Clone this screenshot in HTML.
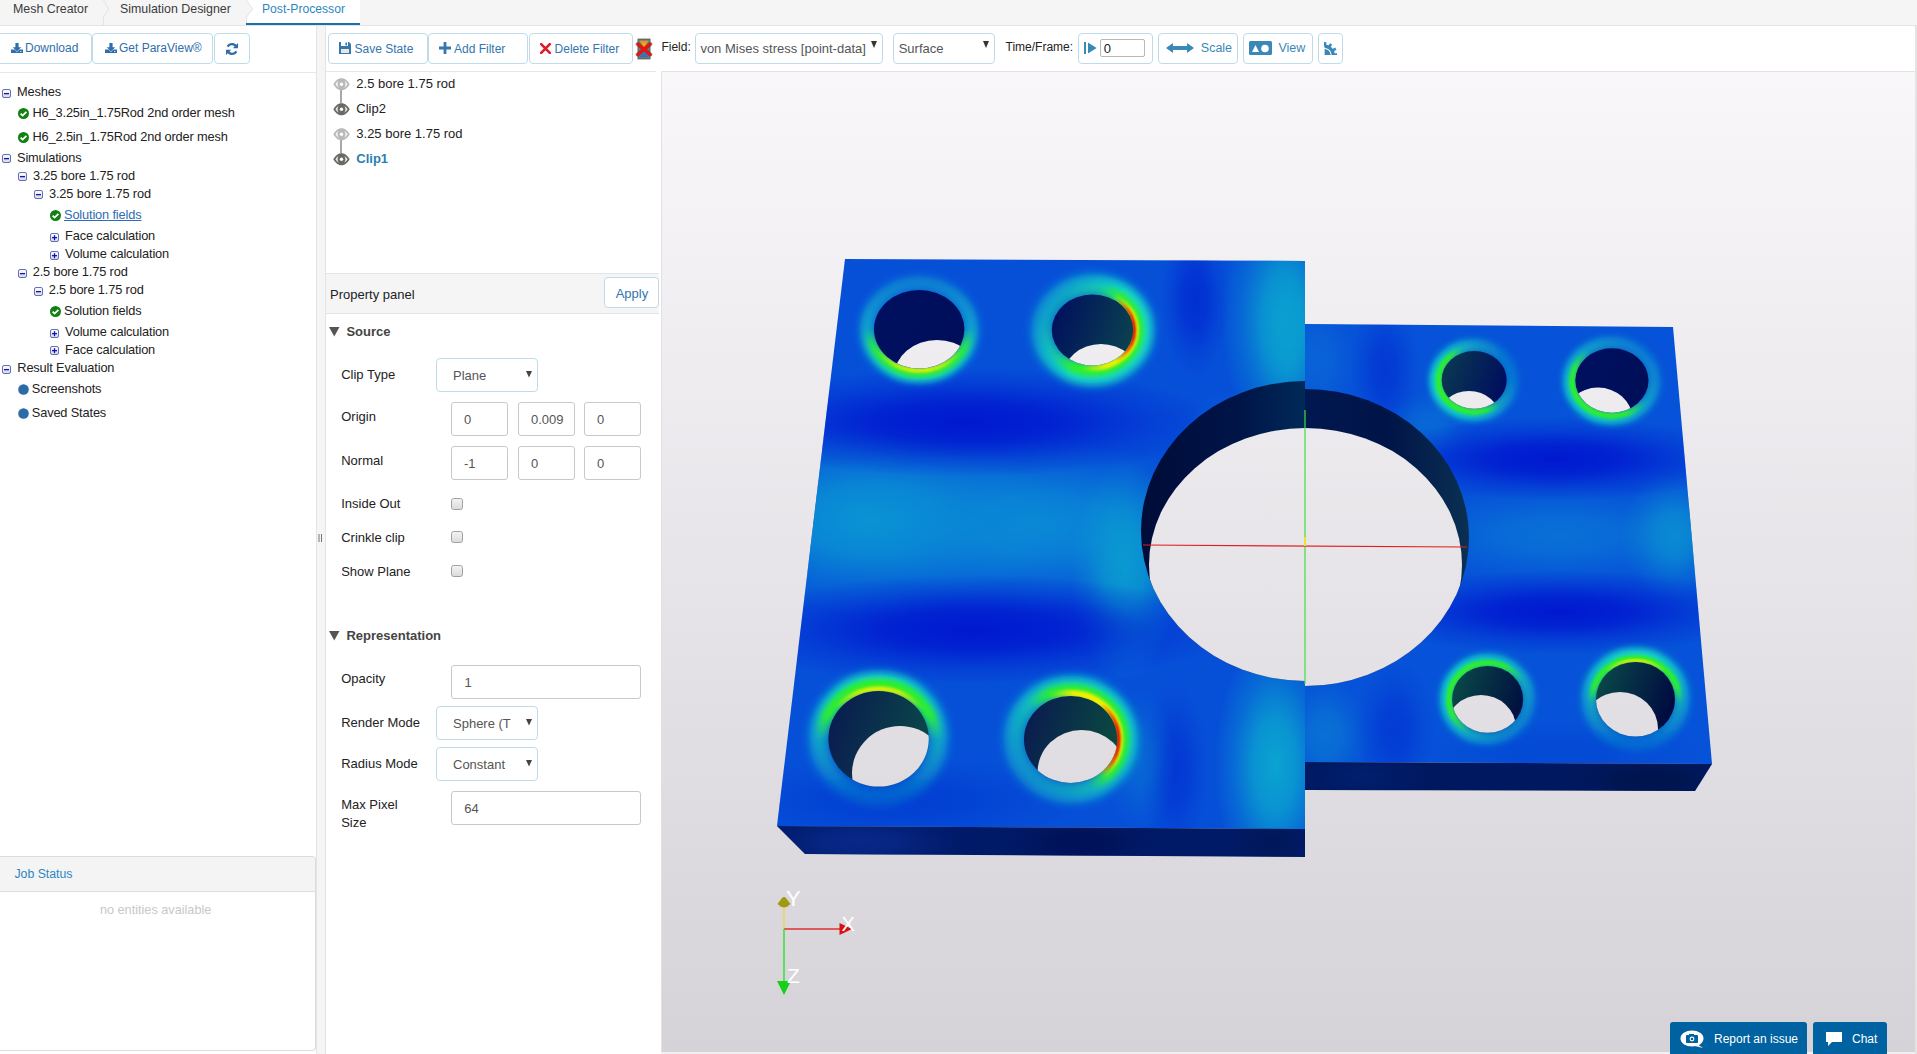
<!DOCTYPE html>
<html><head><meta charset="utf-8">
<style>
*{box-sizing:border-box;margin:0;padding:0}
html,body{width:1917px;height:1054px;overflow:hidden;background:#fff;font-family:"Liberation Sans",sans-serif;color:#333}
.a{position:absolute;display:block}
.t{position:absolute;white-space:nowrap;line-height:1}
.btn{position:absolute;border:1px solid #bfdbea;border-radius:4px;background:#fff}
</style></head><body>
<div class="a" style="left:0px;top:0px;width:1917px;height:26px;background:#f5f5f5;border-bottom:1px solid #e3e3e3"></div><svg class="a" style="left:100px;top:0px" width="14" height="26" viewBox="0 0 14 26"><path d="M3.5 0 L8.5 9 L3.5 17 V25" fill="none" stroke="#e4e4e4" stroke-width="1"/></svg><div class="a" style="left:246px;top:0px;width:114px;height:25px;background:#fff"></div><svg class="a" style="left:244px;top:0px" width="14" height="26" viewBox="0 0 14 26"><path d="M0 0 H2.5 L8.5 9 L2.5 17 V25 H0z" fill="#f5f5f5"/><path d="M2.5 0 L8.5 9 L2.5 17 V25" fill="none" stroke="#e4e4e4" stroke-width="1"/></svg><div class="a" style="left:246px;top:23px;width:114px;height:2px;background:#1a70aa"></div><div class="t" style="left:13px;top:2.90px;font-size:12.4px;color:#3b3b3b;">Mesh Creator</div><div class="t" style="left:120px;top:2.90px;font-size:12.4px;color:#3b3b3b;">Simulation Designer</div><div class="t" style="left:262px;top:3.12px;font-size:12.15px;color:#2a87c1;">Post-Processor</div><div class="a" style="left:0px;top:72px;width:316px;height:1px;background:#e8e8e8"></div><div class="btn" style="left:-4px;top:33px;width:96px;height:31px"></div><div class="btn" style="left:92px;top:33px;width:121px;height:31px"></div><div class="btn" style="left:214px;top:33px;width:36px;height:31px"></div><svg class="a" style="left:11px;top:43px" width="12" height="10" viewBox="0 0 12 10"><path d="M4.4 0h3.2v4.2h2.6L6 8.4 1.8 4.2h2.6z" fill="#2f6ead"/><path d="M0 6.6h3.6L6 9l2.4-2.4H12V10H0z" fill="#2f6ead"/><rect x="9.2" y="8" width="1.2" height="0.9" fill="#fff"/></svg><div class="t" style="left:25px;top:42.44px;font-size:12px;color:#2f6ead;">Download</div><svg class="a" style="left:105px;top:43px" width="12" height="10" viewBox="0 0 12 10"><path d="M4.4 0h3.2v4.2h2.6L6 8.4 1.8 4.2h2.6z" fill="#2f6ead"/><path d="M0 6.6h3.6L6 9l2.4-2.4H12V10H0z" fill="#2f6ead"/><rect x="9.2" y="8" width="1.2" height="0.9" fill="#fff"/></svg><div class="t" style="left:119px;top:42.44px;font-size:12px;color:#2f6ead;">Get ParaView®</div><svg class="a" style="left:226px;top:43px" width="12" height="12" viewBox="0 0 12 12"><path d="M10.5 4.2A5 5 0 0 0 1.6 3.6" fill="none" stroke="#2f6ead" stroke-width="2.2"/><path d="M12 0v5.2H6.8z" fill="#2f6ead"/><path d="M1.5 7.8A5 5 0 0 0 10.4 8.4" fill="none" stroke="#2f6ead" stroke-width="2.2"/><path d="M0 12V6.8h5.2z" fill="#2f6ead"/></svg><svg width="0" height="0" style="position:absolute"><defs><linearGradient id="gbox" x1="0" y1="0" x2="0" y2="1"><stop offset="0" stop-color="#fff"/><stop offset="1" stop-color="#d8d8d8"/></linearGradient></defs></svg><svg class="a" style="left:2px;top:89px" width="9" height="9" viewBox="0 0 9 9"><rect x="0.5" y="0.5" width="8" height="8" rx="1.5" fill="url(#gbox)" stroke="#6270c0" stroke-width="1"/><rect x="2" y="4" width="5" height="1.3" fill="#1010c8"/></svg><div class="t" style="left:17px;top:86.46px;font-size:12.8px;color:#222;letter-spacing:-0.15px">Meshes</div><svg class="a" style="left:18px;top:108px" width="11" height="11" viewBox="0 0 11 11"><circle cx="5.5" cy="5.5" r="5.5" fill="#118011"/><path d="M2.6 5.6l2 2 3.8-3.8" fill="none" stroke="#fff" stroke-width="1.8"/></svg><div class="t" style="left:32.5px;top:107.46px;font-size:12.8px;color:#222;letter-spacing:-0.15px">H6_3.25in_1.75Rod 2nd order mesh</div><svg class="a" style="left:18px;top:132px" width="11" height="11" viewBox="0 0 11 11"><circle cx="5.5" cy="5.5" r="5.5" fill="#118011"/><path d="M2.6 5.6l2 2 3.8-3.8" fill="none" stroke="#fff" stroke-width="1.8"/></svg><div class="t" style="left:32.5px;top:131.46px;font-size:12.8px;color:#222;letter-spacing:-0.15px">H6_2.5in_1.75Rod 2nd order mesh</div><svg class="a" style="left:2px;top:154px" width="9" height="9" viewBox="0 0 9 9"><rect x="0.5" y="0.5" width="8" height="8" rx="1.5" fill="url(#gbox)" stroke="#6270c0" stroke-width="1"/><rect x="2" y="4" width="5" height="1.3" fill="#1010c8"/></svg><div class="t" style="left:17px;top:151.66px;font-size:12.8px;color:#222;letter-spacing:-0.15px">Simulations</div><svg class="a" style="left:18px;top:172px" width="9" height="9" viewBox="0 0 9 9"><rect x="0.5" y="0.5" width="8" height="8" rx="1.5" fill="url(#gbox)" stroke="#6270c0" stroke-width="1"/><rect x="2" y="4" width="5" height="1.3" fill="#1010c8"/></svg><div class="t" style="left:33px;top:169.96px;font-size:12.8px;color:#222;letter-spacing:-0.15px">3.25 bore 1.75 rod</div><svg class="a" style="left:34px;top:190px" width="9" height="9" viewBox="0 0 9 9"><rect x="0.5" y="0.5" width="8" height="8" rx="1.5" fill="url(#gbox)" stroke="#6270c0" stroke-width="1"/><rect x="2" y="4" width="5" height="1.3" fill="#1010c8"/></svg><div class="t" style="left:49px;top:187.96px;font-size:12.8px;color:#222;letter-spacing:-0.15px">3.25 bore 1.75 rod</div><svg class="a" style="left:50px;top:210px" width="11" height="11" viewBox="0 0 11 11"><circle cx="5.5" cy="5.5" r="5.5" fill="#118011"/><path d="M2.6 5.6l2 2 3.8-3.8" fill="none" stroke="#fff" stroke-width="1.8"/></svg><div class="t" style="left:64px;top:209.16px;font-size:12.8px;color:#2d6db5;text-decoration:underline;letter-spacing:-0.15px">Solution fields</div><svg class="a" style="left:50px;top:233px" width="9" height="9" viewBox="0 0 9 9"><rect x="0.5" y="0.5" width="8" height="8" rx="1.5" fill="url(#gbox)" stroke="#6270c0" stroke-width="1"/><rect x="2" y="4" width="5" height="1.3" fill="#1010c8"/><rect x="3.85" y="2.2" width="1.3" height="5" fill="#1010c8"/></svg><div class="t" style="left:65px;top:230.16px;font-size:12.8px;color:#222;letter-spacing:-0.15px">Face calculation</div><svg class="a" style="left:50px;top:251px" width="9" height="9" viewBox="0 0 9 9"><rect x="0.5" y="0.5" width="8" height="8" rx="1.5" fill="url(#gbox)" stroke="#6270c0" stroke-width="1"/><rect x="2" y="4" width="5" height="1.3" fill="#1010c8"/><rect x="3.85" y="2.2" width="1.3" height="5" fill="#1010c8"/></svg><div class="t" style="left:65px;top:248.06px;font-size:12.8px;color:#222;letter-spacing:-0.15px">Volume calculation</div><svg class="a" style="left:18px;top:269px" width="9" height="9" viewBox="0 0 9 9"><rect x="0.5" y="0.5" width="8" height="8" rx="1.5" fill="url(#gbox)" stroke="#6270c0" stroke-width="1"/><rect x="2" y="4" width="5" height="1.3" fill="#1010c8"/></svg><div class="t" style="left:32.7px;top:266.26px;font-size:12.8px;color:#222;letter-spacing:-0.15px">2.5 bore 1.75 rod</div><svg class="a" style="left:34px;top:287px" width="9" height="9" viewBox="0 0 9 9"><rect x="0.5" y="0.5" width="8" height="8" rx="1.5" fill="url(#gbox)" stroke="#6270c0" stroke-width="1"/><rect x="2" y="4" width="5" height="1.3" fill="#1010c8"/></svg><div class="t" style="left:48.7px;top:284.16px;font-size:12.8px;color:#222;letter-spacing:-0.15px">2.5 bore 1.75 rod</div><svg class="a" style="left:50px;top:306px" width="11" height="11" viewBox="0 0 11 11"><circle cx="5.5" cy="5.5" r="5.5" fill="#118011"/><path d="M2.6 5.6l2 2 3.8-3.8" fill="none" stroke="#fff" stroke-width="1.8"/></svg><div class="t" style="left:64px;top:305.16px;font-size:12.8px;color:#222;letter-spacing:-0.15px">Solution fields</div><svg class="a" style="left:50px;top:329px" width="9" height="9" viewBox="0 0 9 9"><rect x="0.5" y="0.5" width="8" height="8" rx="1.5" fill="url(#gbox)" stroke="#6270c0" stroke-width="1"/><rect x="2" y="4" width="5" height="1.3" fill="#1010c8"/><rect x="3.85" y="2.2" width="1.3" height="5" fill="#1010c8"/></svg><div class="t" style="left:65px;top:326.06px;font-size:12.8px;color:#222;letter-spacing:-0.15px">Volume calculation</div><svg class="a" style="left:50px;top:346px" width="9" height="9" viewBox="0 0 9 9"><rect x="0.5" y="0.5" width="8" height="8" rx="1.5" fill="url(#gbox)" stroke="#6270c0" stroke-width="1"/><rect x="2" y="4" width="5" height="1.3" fill="#1010c8"/><rect x="3.85" y="2.2" width="1.3" height="5" fill="#1010c8"/></svg><div class="t" style="left:65px;top:343.96px;font-size:12.8px;color:#222;letter-spacing:-0.15px">Face calculation</div><svg class="a" style="left:2px;top:365px" width="9" height="9" viewBox="0 0 9 9"><rect x="0.5" y="0.5" width="8" height="8" rx="1.5" fill="url(#gbox)" stroke="#6270c0" stroke-width="1"/><rect x="2" y="4" width="5" height="1.3" fill="#1010c8"/></svg><div class="t" style="left:17.3px;top:362.26px;font-size:12.8px;color:#222;letter-spacing:-0.15px">Result Evaluation</div><svg class="a" style="left:18px;top:384px" width="11" height="11" viewBox="0 0 11 11"><circle cx="5.5" cy="5.5" r="5.3" fill="#2d6aa8"/></svg><div class="t" style="left:31.8px;top:383.06px;font-size:12.8px;color:#222;letter-spacing:-0.15px">Screenshots</div><svg class="a" style="left:18px;top:408px" width="11" height="11" viewBox="0 0 11 11"><circle cx="5.5" cy="5.5" r="5.3" fill="#2d6aa8"/></svg><div class="t" style="left:31.8px;top:407.16px;font-size:12.8px;color:#222;letter-spacing:-0.15px">Saved States</div><div class="a" style="left:0px;top:856px;width:316px;height:195px;border:1px solid #dcdcdc;border-radius:0 4px 4px 0;border-left:none;background:#fff"></div><div class="a" style="left:0px;top:857px;width:315px;height:35px;background:#f4f4f4;border-bottom:1px solid #dcdcdc;border-radius:0 3px 0 0"></div><div class="t" style="left:14.4px;top:868.49px;font-size:12.3px;color:#2b88c2;">Job Status</div><div class="t" style="left:99.9px;top:904.25px;font-size:12.7px;color:#c8c8c8;">no entities available</div><div class="a" style="left:316px;top:26px;width:10px;height:1028px;background:#f5f5f5;border-left:1px solid #e4e4e4;border-right:1px solid #e4e4e4"></div><svg class="a" style="left:318px;top:534px" width="5" height="8" viewBox="0 0 5 8"><rect x="0.5" y="0" width="1" height="8" fill="#777"/><rect x="3" y="0" width="1" height="8" fill="#777"/></svg><div class="a" style="left:326px;top:26px;width:1590px;height:45px;background:#fff"></div><div class="a" style="left:326px;top:71px;width:330px;height:1px;background:#e6e6e6"></div><div class="btn" style="left:328px;top:33px;width:100px;height:31px"></div><svg class="a" style="left:339px;top:42px" width="12" height="12" viewBox="0 0 12 12"><path d="M0 0h10l2 2v10H0z" fill="#3478ae"/><rect x="2" y="0" width="7" height="4" fill="#fff"/><rect x="6.4" y="0.6" width="1.6" height="2.8" fill="#3478ae"/><rect x="2" y="7" width="8" height="4" fill="#e6e6e6"/></svg><div class="t" style="left:354.6px;top:42.74px;font-size:12px;color:#3275b0;">Save State</div><div class="btn" style="left:428px;top:33px;width:100px;height:31px"></div><svg class="a" style="left:439px;top:42px" width="12" height="12" viewBox="0 0 12 12"><path d="M4.6 0h2.8v4.6H12v2.8H7.4V12H4.6V7.4H0V4.6h4.6z" fill="#3478ae"/></svg><div class="t" style="left:454px;top:42.74px;font-size:12px;color:#3275b0;">Add Filter</div><div class="btn" style="left:529px;top:33px;width:104px;height:31px"></div><svg class="a" style="left:540px;top:43px" width="11" height="11" viewBox="0 0 11 11"><path d="M1.2 1.2L9.8 9.8M9.8 1.2L1.2 9.8" stroke="#e01b24" stroke-width="2.6" stroke-linecap="round"/></svg><div class="t" style="left:554.6px;top:42.74px;font-size:12px;color:#3275b0;">Delete Filter</div><svg class="a" style="left:635px;top:38px" width="18" height="22" viewBox="0 0 18 22"><defs><linearGradient id="hgt" x1="0" y1="0" x2="0" y2="1"><stop offset="0" stop-color="#f08a20"/><stop offset="1" stop-color="#ffc000"/></linearGradient><linearGradient id="hgb" x1="0" y1="0" x2="0" y2="1"><stop offset="0" stop-color="#1a9ae0"/><stop offset="1" stop-color="#5060a0"/></linearGradient></defs><rect x="3.2" y="1.3" width="11.6" height="19.4" fill="#5a8a8a" stroke="#666" stroke-width="1.4"/><path d="M4.5 2.8h9L9 10z" fill="url(#hgt)"/><path d="M4.5 19.2h9L9 12z" fill="url(#hgb)"/><path d="M2.8 6.2L15.2 16.5M15.2 6.2L2.8 16.5" stroke="#444" stroke-width="4.2" stroke-linecap="round" opacity="0.55"/><path d="M2.8 6.2L15.2 16.5M15.2 6.2L2.8 16.5" stroke="#ee1111" stroke-width="3" stroke-linecap="round"/></svg><div class="t" style="left:661.4px;top:40.54px;font-size:12px;color:#222;">Field:</div><div class="btn" style="left:695px;top:33px;width:188px;height:31px"></div><div class="t" style="left:700.4px;top:41.50px;font-size:13px;color:#555;">von Mises stress [point-data]</div><svg class="a" style="left:871px;top:41px" width="6" height="8" viewBox="0 0 6 8"><path d="M0 0h6L3 7z" fill="#333"/></svg><div class="btn" style="left:893px;top:33px;width:102px;height:31px"></div><div class="t" style="left:898.7px;top:41.50px;font-size:13px;color:#555;">Surface</div><svg class="a" style="left:983px;top:41px" width="6" height="8" viewBox="0 0 6 8"><path d="M0 0h6L3 7z" fill="#333"/></svg><div class="t" style="left:1005.5px;top:40.84px;font-size:12px;color:#222;">Time/Frame:</div><div class="btn" style="left:1078px;top:33px;width:75px;height:31px"></div><svg class="a" style="left:1084px;top:42px" width="13" height="12" viewBox="0 0 13 12"><rect x="0" y="0" width="2" height="12" fill="#3a88b8"/><path d="M4 0.5L12.6 6 4 11.5z" fill="#3a88b8"/></svg><div class="a" style="left:1100px;top:39px;width:45px;height:18px;border:1px solid #b8b8b8;border-radius:2px;background:#fff"></div><div class="t" style="left:1103.7px;top:41.50px;font-size:13px;color:#222;">0</div><div class="btn" style="left:1158px;top:33px;width:80px;height:31px"></div><svg class="a" style="left:1166px;top:43px" width="28" height="10" viewBox="0 0 28 10"><path d="M0 5L7 0v3h14V0l7 5-7 5V7H7v3z" fill="#3a88b8"/></svg><div class="t" style="left:1200.8px;top:41.92px;font-size:12.5px;color:#3a88b8;">Scale</div><div class="btn" style="left:1243px;top:33px;width:70px;height:31px"></div><svg class="a" style="left:1249px;top:41px" width="23" height="14" viewBox="0 0 23 14"><rect x="0" y="0" width="23" height="14" rx="1.5" fill="#3a88b8"/><path d="M3 11L6.5 4 10 11z" fill="#fff"/><circle cx="16" cy="7.5" r="3.8" fill="#fff"/></svg><div class="t" style="left:1278.4px;top:41.92px;font-size:12.5px;color:#3a88b8;">View</div><div class="btn" style="left:1318px;top:33px;width:25px;height:31px"></div><svg class="a" style="left:1324px;top:42px" width="13" height="13" viewBox="0 0 13 13"><path d="M0.6 7A6 6 0 0 1 6.6 13H0.6z" fill="#3a88b8"/><path d="M0.6 2.6A10.4 10.4 0 0 1 11 13H7.6A7 7 0 0 0 0.6 6z" fill="#3a88b8"/><rect x="-1.3" y="-12.9" width="2.6" height="4.5" transform="translate(0.6 13) rotate(2)" fill="#3a88b8"/><rect x="-1.3" y="-12.9" width="2.6" height="4.5" transform="translate(0.6 13) rotate(30)" fill="#3a88b8"/><rect x="-1.3" y="-12.9" width="2.6" height="4.5" transform="translate(0.6 13) rotate(60)" fill="#3a88b8"/><rect x="-1.3" y="-12.9" width="2.6" height="4.5" transform="translate(0.6 13) rotate(88)" fill="#3a88b8"/></svg><div class="a" style="left:340.3px;top:89px;width:2px;height:14px;background:#a8a8a8"></div><div class="a" style="left:340.3px;top:139px;width:2px;height:14px;background:#a8a8a8"></div><svg class="a" style="left:333px;top:77.5px" width="17" height="13" viewBox="0 0 17 13"><path d="M0.3 6.2C2.8 1.8 5.8 0.2 8.5 0.2S14.2 1.8 16.7 6.2C14.2 10.6 11.2 12.2 8.5 12.2S2.8 10.6 0.3 6.2z" fill="#b9b9b9"/><path d="M2.4 6.2C3.6 4.3 4.8 3.3 5.6 2.9 4.9 3.9 4.6 5 4.6 6.2s.3 2.3 1 3.3C4.8 9.1 3.6 8.1 2.4 6.2zM14.6 6.2C13.4 4.3 12.2 3.3 11.4 2.9c.7 1 1 2.1 1 3.3s-.3 2.3-1 3.3c.8-.4 2-1.4 3.2-3.3z" fill="#fff" opacity="0.85"/><circle cx="8.5" cy="6.2" r="1.7" fill="#fff"/></svg><div class="t" style="left:356.3px;top:77.00px;font-size:13px;color:#222;">2.5 bore 1.75 rod</div><svg class="a" style="left:333px;top:102.5px" width="17" height="13" viewBox="0 0 17 13"><path d="M0.3 6.2C2.8 1.8 5.8 0.2 8.5 0.2S14.2 1.8 16.7 6.2C14.2 10.6 11.2 12.2 8.5 12.2S2.8 10.6 0.3 6.2z" fill="#6a6a64"/><path d="M2.4 6.2C3.6 4.3 4.8 3.3 5.6 2.9 4.9 3.9 4.6 5 4.6 6.2s.3 2.3 1 3.3C4.8 9.1 3.6 8.1 2.4 6.2zM14.6 6.2C13.4 4.3 12.2 3.3 11.4 2.9c.7 1 1 2.1 1 3.3s-.3 2.3-1 3.3c.8-.4 2-1.4 3.2-3.3z" fill="#fff" opacity="0.85"/><circle cx="8.5" cy="6.2" r="1.7" fill="#fff"/></svg><div class="t" style="left:356.3px;top:102.00px;font-size:13px;color:#222;">Clip2</div><svg class="a" style="left:333px;top:127.5px" width="17" height="13" viewBox="0 0 17 13"><path d="M0.3 6.2C2.8 1.8 5.8 0.2 8.5 0.2S14.2 1.8 16.7 6.2C14.2 10.6 11.2 12.2 8.5 12.2S2.8 10.6 0.3 6.2z" fill="#b9b9b9"/><path d="M2.4 6.2C3.6 4.3 4.8 3.3 5.6 2.9 4.9 3.9 4.6 5 4.6 6.2s.3 2.3 1 3.3C4.8 9.1 3.6 8.1 2.4 6.2zM14.6 6.2C13.4 4.3 12.2 3.3 11.4 2.9c.7 1 1 2.1 1 3.3s-.3 2.3-1 3.3c.8-.4 2-1.4 3.2-3.3z" fill="#fff" opacity="0.85"/><circle cx="8.5" cy="6.2" r="1.7" fill="#fff"/></svg><div class="t" style="left:356.3px;top:127.00px;font-size:13px;color:#222;">3.25 bore 1.75 rod</div><svg class="a" style="left:333px;top:152.5px" width="17" height="13" viewBox="0 0 17 13"><path d="M0.3 6.2C2.8 1.8 5.8 0.2 8.5 0.2S14.2 1.8 16.7 6.2C14.2 10.6 11.2 12.2 8.5 12.2S2.8 10.6 0.3 6.2z" fill="#6a6a64"/><path d="M2.4 6.2C3.6 4.3 4.8 3.3 5.6 2.9 4.9 3.9 4.6 5 4.6 6.2s.3 2.3 1 3.3C4.8 9.1 3.6 8.1 2.4 6.2zM14.6 6.2C13.4 4.3 12.2 3.3 11.4 2.9c.7 1 1 2.1 1 3.3s-.3 2.3-1 3.3c.8-.4 2-1.4 3.2-3.3z" fill="#fff" opacity="0.85"/><circle cx="8.5" cy="6.2" r="1.7" fill="#fff"/></svg><div class="t" style="left:356.3px;top:151.70px;font-size:13px;color:#2a7db0;font-weight:bold;">Clip1</div><div class="a" style="left:326px;top:273px;width:333px;height:41px;background:#f5f5f5;border-top:1px solid #e4e4e4;border-bottom:1px solid #e4e4e4"></div><div class="t" style="left:330px;top:288.20px;font-size:13px;color:#222;">Property panel</div><div class="btn" style="left:604px;top:277px;width:55px;height:31px"></div><div class="t" style="left:615.7px;top:286.60px;font-size:13px;color:#3275b0;">Apply</div><svg class="a" style="left:329.4px;top:327.2px" width="11" height="10" viewBox="0 0 11 10"><path d="M0 0h10.5L5.25 9.5z" fill="#555"/></svg><div class="t" style="left:346.4px;top:325.30px;font-size:13px;color:#444;font-weight:bold;">Source</div><div class="t" style="left:341.2px;top:367.90px;font-size:13px;color:#222;">Clip Type</div><div class="btn" style="left:436px;top:358px;width:102px;height:34px"></div><div class="t" style="left:453px;top:369.30px;font-size:13px;color:#555;">Plane</div><svg class="a" style="left:526px;top:371px" width="6" height="7" viewBox="0 0 6 7"><path d="M0 0h6L3 6.5z" fill="#444"/></svg><div class="t" style="left:341.2px;top:409.60px;font-size:13px;color:#222;">Origin</div><div class="a" style="left:451px;top:402px;width:57px;height:34px;border:1px solid #c9c9c9;border-radius:3px;background:#fff"></div><div class="t" style="left:464px;top:413.00px;font-size:13px;color:#555;">0</div><div class="a" style="left:518px;top:402px;width:57px;height:34px;border:1px solid #c9c9c9;border-radius:3px;background:#fff"></div><div class="t" style="left:531px;top:413.00px;font-size:13px;color:#555;">0.009</div><div class="a" style="left:584px;top:402px;width:57px;height:34px;border:1px solid #c9c9c9;border-radius:3px;background:#fff"></div><div class="t" style="left:597px;top:413.00px;font-size:13px;color:#555;">0</div><div class="t" style="left:341.2px;top:453.50px;font-size:13px;color:#222;">Normal</div><div class="a" style="left:451px;top:446px;width:57px;height:34px;border:1px solid #c9c9c9;border-radius:3px;background:#fff"></div><div class="t" style="left:464px;top:457.00px;font-size:13px;color:#555;">-1</div><div class="a" style="left:518px;top:446px;width:57px;height:34px;border:1px solid #c9c9c9;border-radius:3px;background:#fff"></div><div class="t" style="left:531px;top:457.00px;font-size:13px;color:#555;">0</div><div class="a" style="left:584px;top:446px;width:57px;height:34px;border:1px solid #c9c9c9;border-radius:3px;background:#fff"></div><div class="t" style="left:597px;top:457.00px;font-size:13px;color:#555;">0</div><div class="t" style="left:341.2px;top:497.00px;font-size:13px;color:#222;">Inside Out</div><svg class="a" style="left:451px;top:497.5px" width="12" height="12" viewBox="0 0 12 12"><defs><linearGradient id="cbg" x1="0" y1="0" x2="0" y2="1"><stop offset="0" stop-color="#f4f4f4"/><stop offset="1" stop-color="#dadada"/></linearGradient></defs><rect x="0.5" y="0.5" width="11" height="11" rx="2.2" fill="url(#cbg)" stroke="#a0a0a0"/></svg><div class="t" style="left:341.2px;top:531.00px;font-size:13px;color:#222;">Crinkle clip</div><svg class="a" style="left:451px;top:531.3px" width="12" height="12" viewBox="0 0 12 12"><defs><linearGradient id="cbg" x1="0" y1="0" x2="0" y2="1"><stop offset="0" stop-color="#f4f4f4"/><stop offset="1" stop-color="#dadada"/></linearGradient></defs><rect x="0.5" y="0.5" width="11" height="11" rx="2.2" fill="url(#cbg)" stroke="#a0a0a0"/></svg><div class="t" style="left:341.2px;top:565.10px;font-size:13px;color:#222;">Show Plane</div><svg class="a" style="left:451px;top:565.2px" width="12" height="12" viewBox="0 0 12 12"><defs><linearGradient id="cbg" x1="0" y1="0" x2="0" y2="1"><stop offset="0" stop-color="#f4f4f4"/><stop offset="1" stop-color="#dadada"/></linearGradient></defs><rect x="0.5" y="0.5" width="11" height="11" rx="2.2" fill="url(#cbg)" stroke="#a0a0a0"/></svg><svg class="a" style="left:329.4px;top:631px" width="11" height="10" viewBox="0 0 11 10"><path d="M0 0h10.5L5.25 9.5z" fill="#555"/></svg><div class="t" style="left:346.4px;top:629.10px;font-size:13px;color:#444;font-weight:bold;">Representation</div><div class="t" style="left:341.2px;top:672.40px;font-size:13px;color:#222;">Opacity</div><div class="a" style="left:451px;top:665px;width:190px;height:34px;border:1px solid #c9c9c9;border-radius:3px;background:#fff"></div><div class="t" style="left:464.4px;top:675.80px;font-size:13px;color:#555;">1</div><div class="t" style="left:341.2px;top:715.90px;font-size:13px;color:#222;">Render Mode</div><div class="btn" style="left:436px;top:706px;width:102px;height:34px"></div><div class="t" style="left:453px;top:716.80px;font-size:13px;color:#555;">Sphere (T</div><svg class="a" style="left:526px;top:719px" width="6" height="7" viewBox="0 0 6 7"><path d="M0 0h6L3 6.5z" fill="#444"/></svg><div class="t" style="left:341.2px;top:756.90px;font-size:13px;color:#222;">Radius Mode</div><div class="btn" style="left:436px;top:747px;width:102px;height:34px"></div><div class="t" style="left:453px;top:757.80px;font-size:13px;color:#555;">Constant</div><svg class="a" style="left:526px;top:760px" width="6" height="7" viewBox="0 0 6 7"><path d="M0 0h6L3 6.5z" fill="#444"/></svg><div class="t" style="left:341.2px;top:798.30px;font-size:13px;color:#222;">Max Pixel</div><div class="t" style="left:341.2px;top:815.60px;font-size:13px;color:#222;">Size</div><div class="a" style="left:451px;top:791px;width:190px;height:34px;border:1px solid #c9c9c9;border-radius:3px;background:#fff"></div><div class="t" style="left:464.2px;top:801.80px;font-size:13px;color:#555;">64</div><div class="a" style="left:661px;top:71px;width:1255px;height:983px;background:#f0f0f0"></div><div class="a" style="left:661px;top:71px;width:1254px;height:981px;background:linear-gradient(#f9f7fa,#d5d3d7);border-left:1px solid #e2e2e2;border-top:1px solid #e2e2e2"></div><div class="a" style="left:1915px;top:26px;width:2px;height:1028px;background:#e4e4e4"></div><svg class="a" style="left:661px;top:71px" width="1256" height="983" viewBox="661 71 1256 983"><defs><linearGradient id="bg" gradientUnits="userSpaceOnUse" x1="0" y1="71" x2="0" y2="1054"><stop offset="0" stop-color="#f9f7fa"/><stop offset="1" stop-color="#d5d3d7"/></linearGradient><clipPath id="ctopL"><polygon points="845,259 1305,261 1305,829 777,826"/></clipPath><clipPath id="ctopR"><polygon points="1305,324 1673,327 1712,764 1305,762"/></clipPath><clipPath id="cfrontL"><polygon points="777,826 1305,829 1305,857 805,854"/></clipPath><clipPath id="cfrontR"><polygon points="1305,762 1712,764 1695,791 1305,790"/></clipPath><radialGradient id="rg1"><stop offset="0" stop-color="#0a94d4" stop-opacity="1.0"/><stop offset="0.35" stop-color="#0a94d4" stop-opacity="0.800"/><stop offset="0.7" stop-color="#0a94d4" stop-opacity="0.300"/><stop offset="1" stop-color="#0a94d4" stop-opacity="0"/></radialGradient><radialGradient id="rg2"><stop offset="0" stop-color="#0a8cd6" stop-opacity="0.95"/><stop offset="0.35" stop-color="#0a8cd6" stop-opacity="0.760"/><stop offset="0.7" stop-color="#0a8cd6" stop-opacity="0.285"/><stop offset="1" stop-color="#0a8cd6" stop-opacity="0"/></radialGradient><radialGradient id="rg3"><stop offset="0" stop-color="#0aa0d0" stop-opacity="0.9"/><stop offset="0.35" stop-color="#0aa0d0" stop-opacity="0.720"/><stop offset="0.7" stop-color="#0aa0d0" stop-opacity="0.270"/><stop offset="1" stop-color="#0aa0d0" stop-opacity="0"/></radialGradient><radialGradient id="rg4"><stop offset="0" stop-color="#0018d0" stop-opacity="1.0"/><stop offset="0.35" stop-color="#0018d0" stop-opacity="0.800"/><stop offset="0.7" stop-color="#0018d0" stop-opacity="0.300"/><stop offset="1" stop-color="#0018d0" stop-opacity="0"/></radialGradient><radialGradient id="rg5"><stop offset="0" stop-color="#0018d0" stop-opacity="1.0"/><stop offset="0.35" stop-color="#0018d0" stop-opacity="0.800"/><stop offset="0.7" stop-color="#0018d0" stop-opacity="0.300"/><stop offset="1" stop-color="#0018d0" stop-opacity="0"/></radialGradient><radialGradient id="rg6"><stop offset="0" stop-color="#0020d0" stop-opacity="0.7"/><stop offset="0.35" stop-color="#0020d0" stop-opacity="0.560"/><stop offset="0.7" stop-color="#0020d0" stop-opacity="0.210"/><stop offset="1" stop-color="#0020d0" stop-opacity="0"/></radialGradient><radialGradient id="rg7"><stop offset="0" stop-color="#0a9ad0" stop-opacity="1.0"/><stop offset="0.35" stop-color="#0a9ad0" stop-opacity="0.800"/><stop offset="0.7" stop-color="#0a9ad0" stop-opacity="0.300"/><stop offset="1" stop-color="#0a9ad0" stop-opacity="0"/></radialGradient><radialGradient id="rg8"><stop offset="0" stop-color="#0aa2d0" stop-opacity="0.8"/><stop offset="0.35" stop-color="#0aa2d0" stop-opacity="0.640"/><stop offset="0.7" stop-color="#0aa2d0" stop-opacity="0.240"/><stop offset="1" stop-color="#0aa2d0" stop-opacity="0"/></radialGradient><radialGradient id="rg9"><stop offset="0" stop-color="#0028d0" stop-opacity="0.6"/><stop offset="0.35" stop-color="#0028d0" stop-opacity="0.480"/><stop offset="0.7" stop-color="#0028d0" stop-opacity="0.180"/><stop offset="1" stop-color="#0028d0" stop-opacity="0"/></radialGradient><radialGradient id="rg10"><stop offset="0" stop-color="#0aa4d0" stop-opacity="1.0"/><stop offset="0.35" stop-color="#0aa4d0" stop-opacity="0.800"/><stop offset="0.7" stop-color="#0aa4d0" stop-opacity="0.300"/><stop offset="1" stop-color="#0aa4d0" stop-opacity="0"/></radialGradient><radialGradient id="rg11"><stop offset="0" stop-color="#0a80d0" stop-opacity="0.5"/><stop offset="0.35" stop-color="#0a80d0" stop-opacity="0.400"/><stop offset="0.7" stop-color="#0a80d0" stop-opacity="0.150"/><stop offset="1" stop-color="#0a80d0" stop-opacity="0"/></radialGradient><radialGradient id="rg12"><stop offset="0" stop-color="#0038d0" stop-opacity="0.7"/><stop offset="0.35" stop-color="#0038d0" stop-opacity="0.560"/><stop offset="0.7" stop-color="#0038d0" stop-opacity="0.210"/><stop offset="1" stop-color="#0038d0" stop-opacity="0"/></radialGradient><radialGradient id="rg13"><stop offset="0" stop-color="#0a70d4" stop-opacity="0.6"/><stop offset="0.35" stop-color="#0a70d4" stop-opacity="0.480"/><stop offset="0.7" stop-color="#0a70d4" stop-opacity="0.180"/><stop offset="1" stop-color="#0a70d4" stop-opacity="0"/></radialGradient><linearGradient id="rr1" x1="0" y1="0" x2="0" y2="1"><stop offset="0" stop-color="#12d8c8" stop-opacity="0.35"/><stop offset="0.5" stop-color="#12d8c8" stop-opacity="0.6"/><stop offset="1" stop-color="#12d8c8" stop-opacity="1"/></linearGradient><linearGradient id="rr2" x1="0" y1="0" x2="0" y2="1"><stop offset="0" stop-color="#2ef028" stop-opacity="0"/><stop offset="0.5" stop-color="#2ef028" stop-opacity="0"/><stop offset="0.72" stop-color="#2ef028" stop-opacity="0.85"/><stop offset="1" stop-color="#2ef028" stop-opacity="1"/></linearGradient><linearGradient id="rr3" x1="0" y1="0" x2="0" y2="1"><stop offset="0" stop-color="#f0f000" stop-opacity="0"/><stop offset="0.75" stop-color="#f0f000" stop-opacity="0"/><stop offset="1" stop-color="#f0f000" stop-opacity="1"/></linearGradient><linearGradient id="rr4" x1="0" y1="0.2" x2="1" y2="0.8"><stop offset="0" stop-color="#12d8c8" stop-opacity="0.5"/><stop offset="0.55" stop-color="#12d8c8" stop-opacity="1"/><stop offset="1" stop-color="#12d8c8" stop-opacity="1"/></linearGradient><linearGradient id="rr5" x1="0" y1="0.2" x2="1" y2="0.8"><stop offset="0" stop-color="#2ef028" stop-opacity="0"/><stop offset="0.35" stop-color="#2ef028" stop-opacity="0.2"/><stop offset="0.55" stop-color="#2ef028" stop-opacity="0.95"/><stop offset="1" stop-color="#2ef028" stop-opacity="1"/></linearGradient><linearGradient id="rr6" x1="0" y1="0.3" x2="1" y2="0.7"><stop offset="0" stop-color="#f0f000" stop-opacity="0"/><stop offset="0.55" stop-color="#f0f000" stop-opacity="0"/><stop offset="0.8" stop-color="#f0f000" stop-opacity="1"/><stop offset="1" stop-color="#f0f000" stop-opacity="1"/></linearGradient><linearGradient id="rr7" x1="0" y1="0" x2="1" y2="0"><stop offset="0" stop-color="#e01800" stop-opacity="0"/><stop offset="0.78" stop-color="#e01800" stop-opacity="0"/><stop offset="1" stop-color="#e01800" stop-opacity="1"/></linearGradient><linearGradient id="rr8" x1="0" y1="1" x2="0" y2="0"><stop offset="0" stop-color="#12d8c8" stop-opacity="0.2"/><stop offset="0.5" stop-color="#12d8c8" stop-opacity="0.6"/><stop offset="1" stop-color="#12d8c8" stop-opacity="1"/></linearGradient><linearGradient id="rr9" x1="0" y1="1" x2="0" y2="0"><stop offset="0" stop-color="#2ef028" stop-opacity="0"/><stop offset="0.5" stop-color="#2ef028" stop-opacity="0.05"/><stop offset="0.72" stop-color="#2ef028" stop-opacity="0.9"/><stop offset="1" stop-color="#2ef028" stop-opacity="1"/></linearGradient><linearGradient id="rr10" x1="0" y1="1" x2="0" y2="0"><stop offset="0" stop-color="#f0f000" stop-opacity="0"/><stop offset="0.8" stop-color="#f0f000" stop-opacity="0"/><stop offset="1" stop-color="#f0f000" stop-opacity="1"/></linearGradient><linearGradient id="rr11" x1="0" y1="1" x2="1" y2="0"><stop offset="0" stop-color="#12d8c8" stop-opacity="0.35"/><stop offset="0.5" stop-color="#12d8c8" stop-opacity="0.75"/><stop offset="1" stop-color="#12d8c8" stop-opacity="1"/></linearGradient><linearGradient id="rr12" x1="0" y1="0.85" x2="1" y2="0.15"><stop offset="0" stop-color="#2ef028" stop-opacity="0"/><stop offset="0.4" stop-color="#2ef028" stop-opacity="0.1"/><stop offset="0.58" stop-color="#2ef028" stop-opacity="0.9"/><stop offset="1" stop-color="#2ef028" stop-opacity="1"/></linearGradient><linearGradient id="rr13" x1="0" y1="0.8" x2="1" y2="0.2"><stop offset="0" stop-color="#f0f000" stop-opacity="0"/><stop offset="0.55" stop-color="#f0f000" stop-opacity="0"/><stop offset="0.75" stop-color="#f0f000" stop-opacity="1"/><stop offset="1" stop-color="#f0f000" stop-opacity="1"/></linearGradient><linearGradient id="rr14" x1="0" y1="0" x2="1" y2="0"><stop offset="0" stop-color="#e01800" stop-opacity="0"/><stop offset="0.82" stop-color="#e01800" stop-opacity="0"/><stop offset="1" stop-color="#e01800" stop-opacity="1"/></linearGradient><radialGradient id="rg14"><stop offset="0" stop-color="#0a2a90" stop-opacity="0.8"/><stop offset="0.35" stop-color="#0a2a90" stop-opacity="0.640"/><stop offset="0.7" stop-color="#0a2a90" stop-opacity="0.240"/><stop offset="1" stop-color="#0a2a90" stop-opacity="0"/></radialGradient><radialGradient id="rg15"><stop offset="0" stop-color="#000e50" stop-opacity="0.7"/><stop offset="0.35" stop-color="#000e50" stop-opacity="0.560"/><stop offset="0.7" stop-color="#000e50" stop-opacity="0.210"/><stop offset="1" stop-color="#000e50" stop-opacity="0"/></radialGradient><radialGradient id="rg16"><stop offset="0" stop-color="#001650" stop-opacity="0.6"/><stop offset="0.35" stop-color="#001650" stop-opacity="0.480"/><stop offset="0.7" stop-color="#001650" stop-opacity="0.180"/><stop offset="1" stop-color="#001650" stop-opacity="0"/></radialGradient><radialGradient id="rg17"><stop offset="0" stop-color="#0a68d6" stop-opacity="0.8"/><stop offset="0.35" stop-color="#0a68d6" stop-opacity="0.640"/><stop offset="0.7" stop-color="#0a68d6" stop-opacity="0.240"/><stop offset="1" stop-color="#0a68d6" stop-opacity="0"/></radialGradient><radialGradient id="rg18"><stop offset="0" stop-color="#0028d0" stop-opacity="0.6"/><stop offset="0.35" stop-color="#0028d0" stop-opacity="0.480"/><stop offset="0.7" stop-color="#0028d0" stop-opacity="0.180"/><stop offset="1" stop-color="#0028d0" stop-opacity="0"/></radialGradient><radialGradient id="rg19"><stop offset="0" stop-color="#0a80d2" stop-opacity="0.5"/><stop offset="0.35" stop-color="#0a80d2" stop-opacity="0.400"/><stop offset="0.7" stop-color="#0a80d2" stop-opacity="0.150"/><stop offset="1" stop-color="#0a80d2" stop-opacity="0"/></radialGradient><radialGradient id="rg20"><stop offset="0" stop-color="#0a74d4" stop-opacity="0.9"/><stop offset="0.35" stop-color="#0a74d4" stop-opacity="0.720"/><stop offset="0.7" stop-color="#0a74d4" stop-opacity="0.270"/><stop offset="1" stop-color="#0a74d4" stop-opacity="0"/></radialGradient><radialGradient id="rg21"><stop offset="0" stop-color="#0028d0" stop-opacity="0.55"/><stop offset="0.35" stop-color="#0028d0" stop-opacity="0.440"/><stop offset="0.7" stop-color="#0028d0" stop-opacity="0.165"/><stop offset="1" stop-color="#0028d0" stop-opacity="0"/></radialGradient><radialGradient id="rg22"><stop offset="0" stop-color="#0a78d6" stop-opacity="0.8"/><stop offset="0.35" stop-color="#0a78d6" stop-opacity="0.640"/><stop offset="0.7" stop-color="#0a78d6" stop-opacity="0.240"/><stop offset="1" stop-color="#0a78d6" stop-opacity="0"/></radialGradient><radialGradient id="rg23"><stop offset="0" stop-color="#0a90d2" stop-opacity="0.9"/><stop offset="0.35" stop-color="#0a90d2" stop-opacity="0.720"/><stop offset="0.7" stop-color="#0a90d2" stop-opacity="0.270"/><stop offset="1" stop-color="#0a90d2" stop-opacity="0"/></radialGradient><radialGradient id="rg24"><stop offset="0" stop-color="#0018d0" stop-opacity="1.0"/><stop offset="0.35" stop-color="#0018d0" stop-opacity="0.800"/><stop offset="0.7" stop-color="#0018d0" stop-opacity="0.300"/><stop offset="1" stop-color="#0018d0" stop-opacity="0"/></radialGradient><radialGradient id="rg25"><stop offset="0" stop-color="#0018d0" stop-opacity="1.0"/><stop offset="0.35" stop-color="#0018d0" stop-opacity="0.800"/><stop offset="0.7" stop-color="#0018d0" stop-opacity="0.300"/><stop offset="1" stop-color="#0018d0" stop-opacity="0"/></radialGradient><radialGradient id="rg26"><stop offset="0" stop-color="#0040d0" stop-opacity="0.5"/><stop offset="0.35" stop-color="#0040d0" stop-opacity="0.400"/><stop offset="0.7" stop-color="#0040d0" stop-opacity="0.150"/><stop offset="1" stop-color="#0040d0" stop-opacity="0"/></radialGradient><linearGradient id="rr15" x1="1" y1="0.3" x2="0" y2="0.7"><stop offset="0" stop-color="#12d8c8" stop-opacity="0.2"/><stop offset="0.5" stop-color="#12d8c8" stop-opacity="0.7"/><stop offset="1" stop-color="#12d8c8" stop-opacity="1"/></linearGradient><linearGradient id="rr16" x1="1" y1="0.2" x2="0" y2="0.8"><stop offset="0" stop-color="#2ef028" stop-opacity="0"/><stop offset="0.4" stop-color="#2ef028" stop-opacity="0.1"/><stop offset="0.6" stop-color="#2ef028" stop-opacity="0.9"/><stop offset="1" stop-color="#2ef028" stop-opacity="1"/></linearGradient><linearGradient id="rr17" x1="1" y1="0" x2="0" y2="1"><stop offset="0" stop-color="#12d8c8" stop-opacity="0.2"/><stop offset="0.5" stop-color="#12d8c8" stop-opacity="0.6"/><stop offset="1" stop-color="#12d8c8" stop-opacity="1"/></linearGradient><linearGradient id="rr18" x1="1" y1="0" x2="0" y2="1"><stop offset="0" stop-color="#2ef028" stop-opacity="0"/><stop offset="0.45" stop-color="#2ef028" stop-opacity="0.05"/><stop offset="0.65" stop-color="#2ef028" stop-opacity="0.9"/><stop offset="1" stop-color="#2ef028" stop-opacity="1"/></linearGradient><linearGradient id="rr19" x1="1" y1="1" x2="0" y2="0"><stop offset="0" stop-color="#12d8c8" stop-opacity="0.2"/><stop offset="0.5" stop-color="#12d8c8" stop-opacity="0.7"/><stop offset="1" stop-color="#12d8c8" stop-opacity="1"/></linearGradient><linearGradient id="rr20" x1="1" y1="1" x2="0" y2="0"><stop offset="0" stop-color="#2ef028" stop-opacity="0"/><stop offset="0.4" stop-color="#2ef028" stop-opacity="0.1"/><stop offset="0.62" stop-color="#2ef028" stop-opacity="0.9"/><stop offset="1" stop-color="#2ef028" stop-opacity="1"/></linearGradient><linearGradient id="rr21" x1="0" y1="1" x2="0" y2="0"><stop offset="0" stop-color="#12d8c8" stop-opacity="0.2"/><stop offset="0.5" stop-color="#12d8c8" stop-opacity="0.6"/><stop offset="1" stop-color="#12d8c8" stop-opacity="1"/></linearGradient><linearGradient id="rr22" x1="0" y1="1" x2="0" y2="0"><stop offset="0" stop-color="#2ef028" stop-opacity="0"/><stop offset="0.45" stop-color="#2ef028" stop-opacity="0.1"/><stop offset="0.65" stop-color="#2ef028" stop-opacity="0.9"/><stop offset="1" stop-color="#2ef028" stop-opacity="1"/></linearGradient><linearGradient id="rr23" x1="0" y1="1" x2="0" y2="0"><stop offset="0" stop-color="#f0f000" stop-opacity="0"/><stop offset="0.85" stop-color="#f0f000" stop-opacity="0"/><stop offset="1" stop-color="#f0f000" stop-opacity="1"/></linearGradient><radialGradient id="rg27"><stop offset="0" stop-color="#002070" stop-opacity="0.8"/><stop offset="0.35" stop-color="#002070" stop-opacity="0.640"/><stop offset="0.7" stop-color="#002070" stop-opacity="0.240"/><stop offset="1" stop-color="#002070" stop-opacity="0"/></radialGradient><radialGradient id="rg28"><stop offset="0" stop-color="#001448" stop-opacity="0.8"/><stop offset="0.35" stop-color="#001448" stop-opacity="0.640"/><stop offset="0.7" stop-color="#001448" stop-opacity="0.240"/><stop offset="1" stop-color="#001448" stop-opacity="0"/></radialGradient><clipPath id="hc0"><ellipse cx="919.2" cy="329.2" rx="45.2" ry="39.3"/></clipPath><linearGradient id="wg0" x1="0" y1="0.2" x2="1" y2="0.5"><stop offset="0" stop-color="#001060"/><stop offset="1" stop-color="#000e5a"/></linearGradient><clipPath id="hc1"><ellipse cx="1092.5" cy="330" rx="40.7" ry="35.5"/></clipPath><linearGradient id="wg1" x1="0" y1="0.2" x2="1" y2="0.5"><stop offset="0" stop-color="#000e5e"/><stop offset="1" stop-color="#0a4050"/></linearGradient><clipPath id="hc2"><ellipse cx="878.6" cy="738.8" rx="50.2" ry="47.8"/></clipPath><linearGradient id="wg2" x1="0" y1="0.2" x2="1" y2="0.5"><stop offset="0" stop-color="#0a1a50"/><stop offset="1" stop-color="#0a4848"/></linearGradient><clipPath id="hc3"><ellipse cx="1070.6" cy="739.4" rx="46.6" ry="43.5"/></clipPath><linearGradient id="wg3" x1="0" y1="0.2" x2="1" y2="0.5"><stop offset="0" stop-color="#0a1a50"/><stop offset="1" stop-color="#0a4a40"/></linearGradient><clipPath id="hc4"><ellipse cx="1474.2" cy="379.9" rx="32.5" ry="28.9"/></clipPath><linearGradient id="wg4" x1="0" y1="0.2" x2="1" y2="0.5"><stop offset="0" stop-color="#0a3a50"/><stop offset="1" stop-color="#000e5e"/></linearGradient><clipPath id="hc5"><ellipse cx="1611.9" cy="380.5" rx="36.6" ry="32.2"/></clipPath><linearGradient id="wg5" x1="0" y1="0.2" x2="1" y2="0.5"><stop offset="0" stop-color="#001060"/><stop offset="1" stop-color="#000e58"/></linearGradient><clipPath id="hc6"><ellipse cx="1487.6" cy="699.4" rx="35.5" ry="33.4"/></clipPath><linearGradient id="wg6" x1="0" y1="0.2" x2="1" y2="0.5"><stop offset="0" stop-color="#0a4a48"/><stop offset="1" stop-color="#001040"/></linearGradient><clipPath id="hc7"><ellipse cx="1635.5" cy="699.2" rx="39.5" ry="37.3"/></clipPath><linearGradient id="wg7" x1="0" y1="0.2" x2="1" y2="0.5"><stop offset="0" stop-color="#0a4a48"/><stop offset="1" stop-color="#000a40"/></linearGradient><clipPath id="halfL"><rect x="1100" y="350" width="205" height="400"/></clipPath><clipPath id="halfR"><rect x="1305" y="350" width="200" height="400"/></clipPath><clipPath id="bigL"><ellipse cx="1305" cy="531" rx="164" ry="150"/></clipPath><clipPath id="bigR"><ellipse cx="1305" cy="537.5" rx="164" ry="148.5"/></clipPath><linearGradient id="wallB" gradientUnits="userSpaceOnUse" x1="1141" y1="0" x2="1305" y2="0"><stop offset="0" stop-color="#000c38"/><stop offset="0.6" stop-color="#001448"/><stop offset="1" stop-color="#002a58"/></linearGradient><linearGradient id="wallB2" gradientUnits="userSpaceOnUse" x1="1305" y1="0" x2="1469" y2="0"><stop offset="0" stop-color="#001850"/><stop offset="0.5" stop-color="#001448"/><stop offset="1" stop-color="#0a3052"/></linearGradient><filter id="b1_2" x="-60%" y="-60%" width="220%" height="220%"><feGaussianBlur stdDeviation="1.2"/></filter><filter id="b1_3" x="-60%" y="-60%" width="220%" height="220%"><feGaussianBlur stdDeviation="1.3"/></filter><filter id="b1_5" x="-60%" y="-60%" width="220%" height="220%"><feGaussianBlur stdDeviation="1.5"/></filter><filter id="b2_5" x="-60%" y="-60%" width="220%" height="220%"><feGaussianBlur stdDeviation="2.5"/></filter><filter id="b3" x="-60%" y="-60%" width="220%" height="220%"><feGaussianBlur stdDeviation="3"/></filter><filter id="b3_5" x="-60%" y="-60%" width="220%" height="220%"><feGaussianBlur stdDeviation="3.5"/></filter><filter id="b4" x="-60%" y="-60%" width="220%" height="220%"><feGaussianBlur stdDeviation="4"/></filter><filter id="b4_5" x="-60%" y="-60%" width="220%" height="220%"><feGaussianBlur stdDeviation="4.5"/></filter></defs><g clip-path="url(#ctopL)"><rect x="760" y="250" width="560" height="600" fill="#0650d8"/><ellipse cx="870" cy="520" rx="190" ry="95" fill="url(#rg1)"/><ellipse cx="1040" cy="525" rx="190" ry="85" fill="url(#rg2)"/><ellipse cx="1125" cy="570" rx="55" ry="110" fill="url(#rg3)"/><ellipse cx="965" cy="422" rx="260" ry="55" fill="url(#rg4)"/><ellipse cx="975" cy="630" rx="260" ry="55" fill="url(#rg5)"/><ellipse cx="1195" cy="300" rx="35" ry="80" fill="url(#rg6)"/><ellipse cx="1282" cy="320" rx="60" ry="130" fill="url(#rg7)"/><ellipse cx="1290" cy="330" rx="35" ry="90" fill="url(#rg8)"/><ellipse cx="1175" cy="770" rx="35" ry="90" fill="url(#rg9)"/><ellipse cx="1275" cy="765" rx="60" ry="130" fill="url(#rg10)"/><ellipse cx="1140" cy="760" rx="35" ry="70" fill="url(#rg11)"/><ellipse cx="900" cy="800" rx="200" ry="45" fill="url(#rg12)"/><ellipse cx="1230" cy="450" rx="50" ry="60" fill="url(#rg13)"/><ellipse cx="919.2" cy="329.2" rx="52.2" ry="46.3" fill="none" stroke="url(#rr1)" stroke-width="14" filter="url(#b3_5)"/><ellipse cx="919.2" cy="329.2" rx="49.2" ry="43.3" fill="none" stroke="url(#rr2)" stroke-width="9" filter="url(#b2_5)"/><ellipse cx="919.2" cy="329.2" rx="47.2" ry="41.3" fill="none" stroke="url(#rr3)" stroke-width="4" filter="url(#b1_5)"/><ellipse cx="1092.5" cy="330" rx="50.7" ry="45.5" fill="none" stroke="url(#rr4)" stroke-width="20" filter="url(#b4_5)"/><ellipse cx="1092.5" cy="330" rx="45.7" ry="40.5" fill="none" stroke="url(#rr5)" stroke-width="11" filter="url(#b2_5)"/><ellipse cx="1092.5" cy="330" rx="43.2" ry="38.0" fill="none" stroke="url(#rr6)" stroke-width="6" filter="url(#b1_5)"/><ellipse cx="1092.5" cy="330" rx="41.7" ry="36.5" fill="none" stroke="url(#rr7)" stroke-width="4" filter="url(#b1_2)"/><ellipse cx="878.6" cy="738.8" rx="60.2" ry="57.8" fill="none" stroke="url(#rr8)" stroke-width="18" filter="url(#b4)"/><ellipse cx="878.6" cy="738.8" rx="56.2" ry="53.8" fill="none" stroke="url(#rr9)" stroke-width="12" filter="url(#b2_5)"/><ellipse cx="878.6" cy="738.8" rx="52.2" ry="49.8" fill="none" stroke="url(#rr10)" stroke-width="5" filter="url(#b1_5)"/><ellipse cx="1070.6" cy="739.4" rx="56.6" ry="53.5" fill="none" stroke="url(#rr11)" stroke-width="20" filter="url(#b4)"/><ellipse cx="1070.6" cy="739.4" rx="52.6" ry="49.5" fill="none" stroke="url(#rr12)" stroke-width="12" filter="url(#b2_5)"/><ellipse cx="1070.6" cy="739.4" rx="49.1" ry="46.0" fill="none" stroke="url(#rr13)" stroke-width="7" filter="url(#b1_5)"/><ellipse cx="1070.6" cy="739.4" rx="47.800000000000004" ry="44.7" fill="none" stroke="url(#rr14)" stroke-width="4.5" filter="url(#b1_3)"/></g><g clip-path="url(#cfrontL)"><rect x="770" y="820" width="540" height="40" fill="#001a68"/><ellipse cx="860" cy="842" rx="110" ry="30" fill="url(#rg14)"/><ellipse cx="1080" cy="842" rx="80" ry="30" fill="url(#rg15)"/><ellipse cx="1270" cy="842" rx="50" ry="30" fill="url(#rg16)"/></g><g clip-path="url(#ctopR)"><rect x="1300" y="320" width="420" height="450" fill="#0652d8"/><ellipse cx="1318" cy="360" rx="40" ry="60" fill="url(#rg17)"/><ellipse cx="1385" cy="370" rx="35" ry="70" fill="url(#rg18)"/><ellipse cx="1430" cy="425" rx="40" ry="35" fill="url(#rg19)"/><ellipse cx="1325" cy="735" rx="45" ry="60" fill="url(#rg20)"/><ellipse cx="1395" cy="730" rx="40" ry="70" fill="url(#rg21)"/><ellipse cx="1560" cy="535" rx="170" ry="50" fill="url(#rg22)"/><ellipse cx="1675" cy="535" rx="55" ry="65" fill="url(#rg23)"/><ellipse cx="1555" cy="459" rx="190" ry="42" fill="url(#rg24)"/><ellipse cx="1560" cy="612" rx="200" ry="42" fill="url(#rg25)"/><ellipse cx="1560" cy="750" rx="150" ry="30" fill="url(#rg26)"/><ellipse cx="1474.2" cy="379.9" rx="38.5" ry="34.9" fill="none" stroke="url(#rr15)" stroke-width="12" filter="url(#b3)"/><ellipse cx="1474.2" cy="379.9" rx="35.5" ry="31.9" fill="none" stroke="url(#rr16)" stroke-width="6.5" filter="url(#b1_5)"/><ellipse cx="1611.9" cy="380.5" rx="42.6" ry="38.2" fill="none" stroke="url(#rr17)" stroke-width="12" filter="url(#b3)"/><ellipse cx="1611.9" cy="380.5" rx="39.6" ry="35.2" fill="none" stroke="url(#rr18)" stroke-width="6.5" filter="url(#b1_5)"/><ellipse cx="1487.6" cy="699.4" rx="41.5" ry="39.4" fill="none" stroke="url(#rr19)" stroke-width="12" filter="url(#b3)"/><ellipse cx="1487.6" cy="699.4" rx="38.5" ry="36.4" fill="none" stroke="url(#rr20)" stroke-width="6.5" filter="url(#b1_5)"/><ellipse cx="1635.5" cy="699.2" rx="46.5" ry="44.3" fill="none" stroke="url(#rr21)" stroke-width="14" filter="url(#b3_5)"/><ellipse cx="1635.5" cy="699.2" rx="43.0" ry="40.8" fill="none" stroke="url(#rr22)" stroke-width="7" filter="url(#b1_5)"/><ellipse cx="1635.5" cy="699.2" rx="41.0" ry="38.8" fill="none" stroke="url(#rr23)" stroke-width="3" filter="url(#b1_2)"/></g><g clip-path="url(#cfrontR)"><rect x="1300" y="755" width="420" height="40" fill="#001860"/><ellipse cx="1360" cy="777" rx="70" ry="25" fill="url(#rg27)"/><ellipse cx="1650" cy="780" rx="80" ry="25" fill="url(#rg28)"/></g><ellipse cx="919.2" cy="329.2" rx="45.2" ry="39.3" fill="url(#wg0)"/><ellipse cx="937" cy="377" rx="43" ry="37" fill="url(#bg)" clip-path="url(#hc0)"/><ellipse cx="1092.5" cy="330" rx="40.7" ry="35.5" fill="url(#wg1)"/><ellipse cx="1101" cy="377" rx="38" ry="33" fill="url(#bg)" clip-path="url(#hc1)"/><ellipse cx="878.6" cy="738.8" rx="50.2" ry="47.8" fill="url(#wg2)"/><ellipse cx="900" cy="773.5" rx="48" ry="47.5" fill="url(#bg)" clip-path="url(#hc2)"/><ellipse cx="1070.6" cy="739.4" rx="46.6" ry="43.5" fill="url(#wg3)"/><ellipse cx="1081.6" cy="772" rx="44" ry="42" fill="url(#bg)" clip-path="url(#hc3)"/><ellipse cx="1474.2" cy="379.9" rx="32.5" ry="28.9" fill="url(#wg4)"/><ellipse cx="1469" cy="418" rx="31" ry="27" fill="url(#bg)" clip-path="url(#hc4)"/><ellipse cx="1611.9" cy="380.5" rx="36.6" ry="32.2" fill="url(#wg5)"/><ellipse cx="1598" cy="417.6" rx="34" ry="30" fill="url(#bg)" clip-path="url(#hc5)"/><ellipse cx="1487.6" cy="699.4" rx="35.5" ry="33.4" fill="url(#wg6)"/><ellipse cx="1481" cy="728" rx="35" ry="33" fill="url(#bg)" clip-path="url(#hc6)"/><ellipse cx="1635.5" cy="699.2" rx="39.5" ry="37.3" fill="url(#wg7)"/><ellipse cx="1620" cy="729" rx="38" ry="37" fill="url(#bg)" clip-path="url(#hc7)"/><g clip-path="url(#halfL)"><ellipse cx="1305" cy="531" rx="164" ry="150" fill="url(#wallB)"/><ellipse cx="1305.5" cy="565" rx="156.5" ry="137" fill="url(#bg)" clip-path="url(#bigL)"/></g><g clip-path="url(#halfR)"><ellipse cx="1305" cy="537.5" rx="164" ry="148.5" fill="url(#wallB2)"/><ellipse cx="1305.5" cy="565" rx="156.5" ry="137" fill="url(#bg)" clip-path="url(#bigR)"/></g><line x1="1305" y1="410" x2="1305" y2="684" stroke="#40e040" stroke-width="1.2"/><line x1="1143" y1="545" x2="1467" y2="547" stroke="#e02020" stroke-width="1.2"/><rect x="1304" y="537" width="2" height="9" fill="#f0e030"/><line x1="784" y1="908" x2="784" y2="929" stroke="#e8d860" stroke-width="1.6"/><line x1="784" y1="929" x2="841" y2="929" stroke="#e03030" stroke-width="1.6"/><line x1="784" y1="929" x2="784" y2="983" stroke="#40e040" stroke-width="1.6"/><path d="M777.5 904 L782 898 Q784 896 786 898 L790.5 904 Q784 911 777.5 904z" fill="#a09a10"/><path d="M839.5 923 L852 929 L839.5 935z" fill="#d81010"/><path d="M777 981 L791 981 L784 995z" fill="#18d018"/><text x="786" y="906" font-size="22" fill="#fff" font-family="Liberation Sans">Y</text><text x="841.5" y="931" font-size="20" fill="#fff" font-family="Liberation Sans">X</text><text x="787" y="983" font-size="21" fill="#fff" font-family="Liberation Sans">Z</text></svg><div class="a" style="left:1670px;top:1022px;width:137px;height:32px;background:#0062a0;border-radius:3px 3px 0 0"></div><svg class="a" style="left:1680px;top:1030px" width="24" height="18" viewBox="0 0 24 18"><ellipse cx="12" cy="8.5" rx="11.5" ry="8" fill="#fff"/><path d="M17 14l6 4-8-2z" fill="#fff"/><rect x="6" y="5" width="12" height="8" rx="1" fill="#0062a0"/><rect x="9" y="4" width="5" height="2" fill="#0062a0"/><circle cx="12" cy="9" r="2.4" fill="#fff"/><circle cx="12" cy="9" r="1.3" fill="#0062a0"/></svg><div class="t" style="left:1714px;top:1032.84px;font-size:12px;color:#fff;">Report an issue</div><div class="a" style="left:1813px;top:1022px;width:74px;height:32px;background:#0062a0;border-radius:3px 3px 0 0"></div><svg class="a" style="left:1826px;top:1032px" width="17" height="15" viewBox="0 0 17 15"><path d="M0 0h16v10H6l-4 4v-4H0z" fill="#fff"/></svg><div class="t" style="left:1852px;top:1032.84px;font-size:12px;color:#fff;">Chat</div></body></html>
